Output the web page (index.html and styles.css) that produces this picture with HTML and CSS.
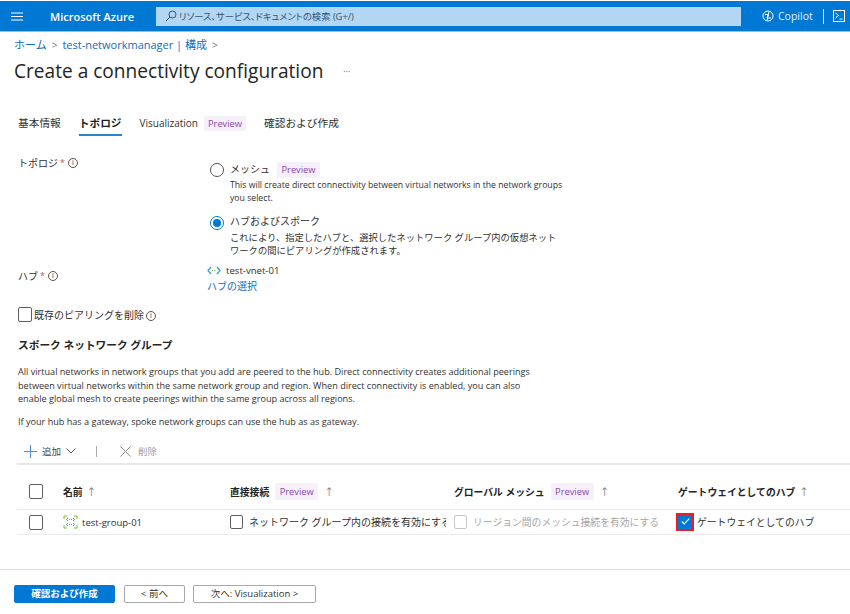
FILE: index.html
```html
<!DOCTYPE html>
<html lang="ja">
<head>
<meta charset="utf-8">
<title>Create a connectivity configuration</title>
<link rel="stylesheet" href="styles.css">
</head>
<body>
<header class="topbar">
  <svg class="menu" width="12" height="9" viewBox="0 0 12 9"><path d="M0 1h12M0 4.5h12M0 8h12" stroke="#fff" stroke-width="1"/></svg>
  <div class="brand">Microsoft Azure</div>
  <div class="search">
    <svg width="12" height="12" viewBox="0 0 12 12" fill="none" stroke="#33536e" stroke-width="1"><circle cx="7.5" cy="4.5" r="3.5"/><path d="M5 7l-4 4"/></svg>
    <span>リソース、サービス、ドキュメントの検索 (G+/)</span>
  </div>
  <div class="copilot">
    <svg width="12" height="12" viewBox="0 0 12 12" fill="none" stroke="#fff" stroke-width="1"><circle cx="6" cy="6" r="5"/><path d="M7 1.5L5 10.5M3 4.5h3.5L5 8M5.5 8h3.5"/></svg>
    <span>Copilot</span>
  </div>
  <div class="bar-sep"></div>
  <svg class="shell" width="12" height="12" viewBox="0 0 12 12" fill="none" stroke="#fff" stroke-width="1"><rect x=".5" y=".5" width="11" height="11"/><path d="M2.5 3l3 2.5-3 2.5M6.500 9h3"/></svg>
</header>

<main class="content">
  <nav class="crumbs"><a>ホーム</a><span class="chev">&gt;</span><a>test-networkmanager | 構成</a><span class="chev">&gt;</span></nav>
  <div class="title-row"><h1>Create a connectivity configuration</h1><span class="more">···</span></div>

  <div class="tabs">
    <span class="tab">基本情報</span>
    <span class="tab active">トポロジ</span>
    <span class="tab"><span class="tab-en">Visualization</span><span class="badge tab-badge">Preview</span></span>
    <span class="tab">確認および作成</span>
  </div>

  <section class="form">
    <div class="flabel">トポロジ<span class="req">*</span><span class="info">i</span></div>
    <div class="options">
      <div class="option">
        <span class="radio"></span>
        <div class="opt-body">
          <div class="opt-title">メッシュ<span class="badge opt-badge">Preview</span></div>
          <div class="opt-desc en">This will create direct connectivity between virtual networks in the network groups you select.</div>
        </div>
      </div>
      <div class="option second">
        <span class="radio on"></span>
        <div class="opt-body">
          <div class="opt-title plain">ハブおよびスポーク</div>
          <div class="opt-desc ja">これにより、指定したハブと、選択したネットワーク グループ内の仮想ネットワークの間にピアリングが作成されます。</div>
        </div>
      </div>
    </div>
    <div class="flabel hub-label">ハブ<span class="req">*</span><span class="info">i</span></div>
    <div class="hub">
      <div class="hub-name">
        <svg width="14" height="9" viewBox="0 0 14 9" fill="none" stroke-width="1.2"><path d="M4 1L1 4.500 4 8" stroke="#2a9fd8"/><path d="M10 1l3 3.500L10 8" stroke="#2a9fd8"/><path d="M5 4.500h1M7.500 4.500h1" stroke="#6fb52c"/></svg>
        <span>test-vnet-01</span>
      </div>
      <a class="link">ハブの選択</a>
    </div>
  </section>

  <label class="remove"><span class="box lg"></span>既存のピアリングを削除<span class="info">i</span></label>

  <h2>スポーク ネットワーク グループ</h2>
  <p class="para">All virtual networks in network groups that you add are peered to the hub. Direct connectivity creates additional peerings between virtual networks within the same network group and region. When direct connectivity is enabled, you can also enable global mesh to create peerings within the same group across all regions.</p>
  <p class="para second-para">If your hub has a gateway, spoke network groups can use the hub as as gateway.</p>

  <div class="toolbar">
    <svg width="13" height="13" viewBox="0 0 13 13"><path d="M6.500 0v13M0 6.500h13" stroke="#4a90d9" stroke-width="1.100"/></svg>
    <span class="add">追加</span>
    <svg width="10" height="6" viewBox="0 0 10 6" fill="none"><path d="M.5.5l4.500 4.500L9.500.5" stroke="#555"/></svg>
    <span class="tool-sep"></span>
    <svg class="x" width="11" height="11" viewBox="0 0 11 11"><path d="M.5.5l10 10M10.500.5l-10 10" stroke="#8a8a8a"/></svg>
    <span class="del">削除</span>
  </div>

  <div class="table">
    <div class="row head">
      <div class="c0"><span class="box lg"></span></div>
      <div class="c1">名前<span class="sort">↑</span></div>
      <div class="c2">直接接続<span class="badge th-badge">Preview</span><span class="sort far">↑</span></div>
      <div class="c3">グローバル メッシュ<span class="badge th-badge">Preview</span><span class="sort far">↑</span></div>
      <div class="c4">ゲートウェイとしてのハブ<span class="sort">↑</span></div>
    </div>
    <div class="row body">
      <div class="c0"><span class="box lg"></span></div>
      <div class="c1 name">
        <svg width="15" height="14" viewBox="0 0 15 14" fill="none"><path d="M1 4V1h3M11 1h3v3" stroke="#7ab929"/><path d="M1 10v3h3M11 13h3v-3" stroke="#7ab929"/><path d="M5 3L3.500 4.500 5 6M10 3l1.500 1.500L10 6M5 8L3.500 9.500 5 11M10 8l1.500 1.500L10 11" stroke="#2a9fd8"/><path d="M6 4.500h3M6 9.500h3" stroke="#2a9fd8" stroke-dasharray="1 1"/></svg>
        <span>test-group-01</span>
      </div>
      <div class="c2 clip"><span class="box"></span><span class="cell-text">ネットワーク グループ内の接続を有効にする</span></div>
      <div class="c3 clip muted"><span class="box dim"></span><span class="cell-text">リージョン間のメッシュ接続を有効にする</span></div>
      <div class="c4 clip"><span class="box checked"><svg width="9" height="7" viewBox="0 0 9 7" fill="none"><path d="M.7 3.500l2.500 2.500L8.300.7" stroke="#fff" stroke-width="1.100"/></svg></span><span class="cell-text tight">ゲートウェイとしてのハブ</span></div>
    </div>
  </div>
</main>

<footer class="footer">
  <button class="btn primary">確認および作成</button>
  <button class="btn prev">&lt; 前へ</button>
  <button class="btn next">次へ: Visualization &gt;</button>
</footer>
</body>
</html>
```

FILE: styles.css
```css
* { box-sizing: border-box; }
html, body { margin: 0; padding: 0; }
body {
  width: 850px;
  height: 614px;
  overflow: hidden;
  background: #fff;
  color: #323130;
  font-family: "Open Sans", "Noto Sans CJK JP", sans-serif;
  font-size: 10px;
  position: relative;
}
a { color: #0f6cbd; }

.topbar {
  margin-top: 1px;
  height: 31px;
  background: #0078d4;
  border-bottom: 1px solid #8cc4ee;
  display: flex;
  align-items: center;
  color: #fff;
}
.menu { margin-left: 11px; }
.brand { margin-left: 27px; width: 106px; font-size: 11px; font-weight: 600; white-space: nowrap; }
.search {
  width: 585px;
  height: 19px;
  background: #b3d6f2;
  display: flex;
  align-items: center;
  gap: 2px;
  padding-left: 9px;
  color: #33536e;
  font-size: 9.300px;
  font-feature-settings: "palt";
}
.copilot { margin-left: 21px; display: flex; align-items: center; gap: 4px; font-size: 10.500px; color: #e3f0fb; }
.bar-sep { width: 1px; height: 15px; background: #cfe5f7; margin-left: 10px; }
.shell { margin-left: 9px; }

.content { padding-left: 14px; }
.crumbs { margin-top: 5px; height: 16px; line-height: 16px; font-size: 11px; display: flex; align-items: center; }
.chev { color: #777; margin: 0 5px; font-size: 10px; }
.title-row { margin-top: 4px; height: 28px; display: flex; align-items: center; }
h1 { margin: 0; font-size: 19.100px; font-weight: 400; color: #252423; }
.more { margin-left: 20px; color: #666; font-size: 9px; }

.tabs { margin: 29px 0 0 4px; display: flex; height: 22px; font-size: 10.700px; }
.tab { margin-right: 18px; line-height: 19px; height: 22px; white-space: nowrap; }
.tab-en { font-size: 10px; }
.tab.active { font-weight: 700; border-bottom: 2px solid #2a83cc; margin-right: 18px; color: #201f1e; }
.badge { display: inline-block; background: #f6f0fa; color: #8a45ad; font-size: 9.300px; border-radius: 2px; font-weight: 400; text-align: center; }
.tab-badge { margin-left: 6px; width: 42px; height: 15px; line-height: 15px; }

.form { margin: 20px 0 0 4px; display: grid; grid-template-columns: 190px 360px; }
.flabel { display: flex; align-items: flex-start; line-height: 14px; height: 14px; }
.req { color: #d0524a; margin-left: 2px; font-size: 9px; }
.info {
  display: inline-block; width: 10px; height: 10px; border: 1px solid #555; border-radius: 50%;
  font-size: 7px; line-height: 8px; text-align: center; margin: 2px 0 0 3px; color: #333; font-weight: 400; flex: none;
}
.options { margin-top: 5px; }
.option { display: flex; }
.option.second { margin-top: 10px; }
.radio { flex: none; width: 14px; height: 14px; border: 1px solid #555; border-radius: 50%; margin: 2px 6px 0 2px; }
.radio.on { border-color: #0078d4; position: relative; }
.radio.on::after { content: ""; position: absolute; left: 2px; top: 2px; width: 8px; height: 8px; background: #0078d4; border-radius: 50%; }
.opt-title { height: 17px; line-height: 16px; font-size: 10px; }
.opt-title.plain { height: 17px; line-height: 14px; }
.opt-badge { width: 43px; height: 16px; line-height: 16px; margin-left: 7px; }
.opt-desc { font-size: 9.200px; line-height: 12.500px; margin-top: 1px; width: 335px; line-break: loose; }
.opt-desc.en { font-size: 8.700px; }
.opt-desc.ja { font-size: 9.300px; width: 329px; }
.hub-label { margin-top: 12px; }
.hub { margin-top: 6px; line-height: 15.500px; margin-left: -1px; }
.hub-name { display: flex; align-items: center; gap: 5px; font-size: 9.600px; }
.link { font-size: 10px; color: #0f6cbd; }

.remove { margin: 13px 0 0 4px; display: flex; align-items: center; height: 15px; gap: 2px; }
.remove .info { margin-left: 0; }
.box { flex: none; display: inline-flex; align-items: center; justify-content: center; width: 13px; height: 14px; border: 1px solid #605e5c; border-radius: 2px; background: #fff; }
.box.lg { width: 14px; height: 15px; }
.box.dim { border-color: #c8c6c4; }

h2 { margin: 16px 0 0 4px; font-size: 10.700px; line-height: 15px; font-weight: 700; color: #252423; }
.para { margin: 12px 0 0 4px; width: 533px; font-size: 9.100px; line-height: 13.500px; }
.second-para { margin-top: 9px; }

.toolbar { margin: 13px 0 0 10px; height: 20px; display: flex; align-items: center; font-size: 9.500px; color: #484644; }
.add { margin: 0 5px 0 5px; }
.tool-sep { width: 1px; height: 11px; background: #aaa; margin: 0 23px 0 20px; }
.del { margin-left: 7px; color: #a19f9d; }

.table { margin: 2px 0 0 3px; border-top: 2px solid #e8e8e8; }
.row { display: grid; grid-template-columns: 46px 167px 224px 224px 172px; border-bottom: 1px solid #edebe9; align-items: center; white-space: nowrap; }
.head { height: 45px; padding-top: 9px; font-weight: 700; color: #252423; font-size: 9.800px; }
.body { height: 25px; font-size: 9.800px; }
.c0 { padding-left: 12px; display: flex; }
.c1, .c2, .c3, .c4 { display: flex; align-items: center; }
.sort { margin-left: 4px; color: #777; font-weight: 400; }
.sort.far { margin-left: 6px; }
.th-badge { width: 43px; height: 17px; line-height: 17px; margin-left: 6px; }
.name { gap: 4px; font-size: 9.500px; }
.cell-text { margin-left: 6px; }
.cell-text.tight { margin-left: 5px; }
.clip { margin-top: -1px; }
.c2.clip { padding-right: 8px; font-size: 10px; }
.c2.clip .cell-text { min-width: 0; overflow: hidden; }
.muted { color: #a8a6a4; }
.box.checked { width: 14px; height: 14px; background: #0078d4; border-color: #0078d4; outline: 2px solid #ec1c24; outline-offset: 0; border-radius: 0; }

.footer {
  position: absolute; left: 0; right: 0; top: 569px; height: 45px;
  border-top: 1px solid #dcdcdc;
  padding: 15px 0 0 14px;
  display: flex; align-items: flex-start;
}
.btn { height: 18px; font-family: inherit; font-size: 9.500px; padding: 0; line-height: 16px; background: #fff; border: 1px solid #a8a8a8; color: #323130; border-radius: 2px; }
.primary { width: 101px; background: #0078d4; border-color: #0078d4; color: #fff; font-weight: 600; }
.prev { width: 61px; margin-left: 9px; }
.next { width: 123px; margin-left: 8px; }
```
